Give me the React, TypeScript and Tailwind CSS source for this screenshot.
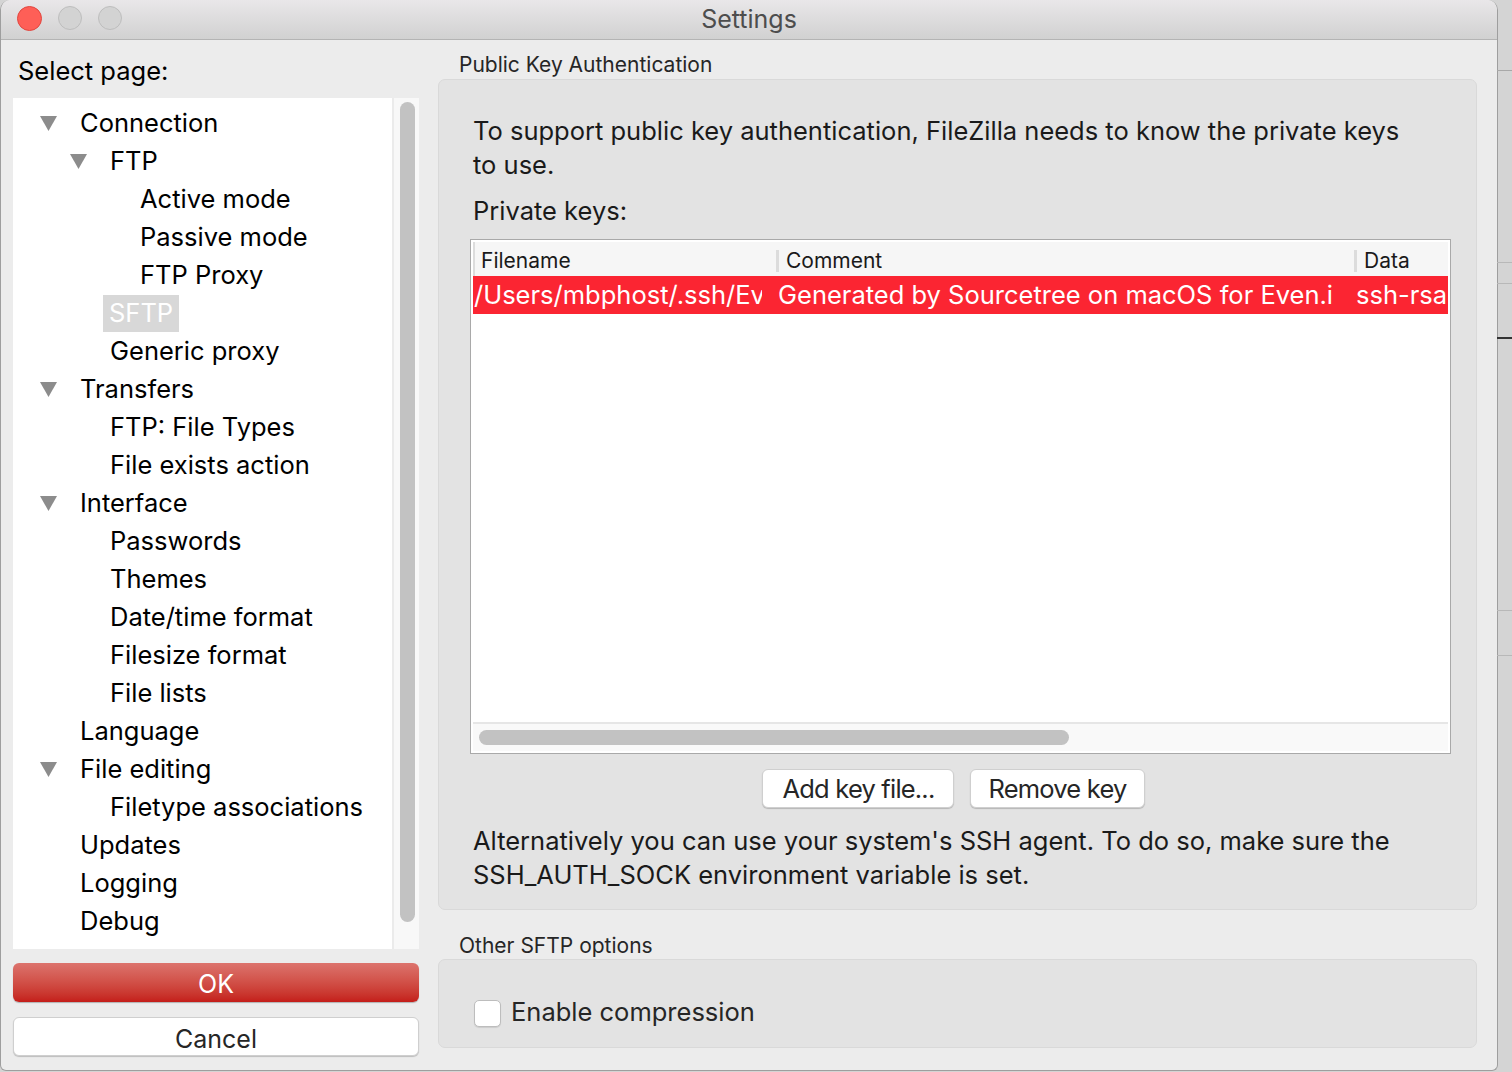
import React from 'react';

type TreeItem = { label: string; level: number; expanded?: boolean; selected?: boolean };

const tree: TreeItem[] = [
  { label: 'Connection', level: 0, expanded: true },
  { label: 'FTP', level: 1, expanded: true },
  { label: 'Active mode', level: 2 },
  { label: 'Passive mode', level: 2 },
  { label: 'FTP Proxy', level: 2 },
  { label: 'SFTP', level: 1, selected: true },
  { label: 'Generic proxy', level: 1 },
  { label: 'Transfers', level: 0, expanded: true },
  { label: 'FTP: File Types', level: 1 },
  { label: 'File exists action', level: 1 },
  { label: 'Interface', level: 0, expanded: true },
  { label: 'Passwords', level: 1 },
  { label: 'Themes', level: 1 },
  { label: 'Date/time format', level: 1 },
  { label: 'Filesize format', level: 1 },
  { label: 'File lists', level: 1 },
  { label: 'Language', level: 0 },
  { label: 'File editing', level: 0, expanded: true },
  { label: 'Filetype associations', level: 1 },
  { label: 'Updates', level: 0 },
  { label: 'Logging', level: 0 },
  { label: 'Debug', level: 0 },
];

const indent = ['pl-[67px]', 'pl-[97px]', 'pl-[127px]'];
const arrowPos = ['left-[27px]', 'left-[57px]', 'left-[87px]'];

function Disclosure({ level }: { level: number }) {
  return (
    <svg className={`absolute top-[12px] ${arrowPos[level]} w-[17px] h-[15px]`} viewBox="0 0 17 15">
      <path d="M0 0 H17 L8.5 15 Z" fill="#8c8c8c" />
    </svg>
  );
}

function TreeRow({ item }: { item: TreeItem }) {
  return (
    <div className={`relative h-[38px] flex items-center ${indent[item.level]}`}>
      {item.expanded && <Disclosure level={item.level} />}
      {item.selected ? (
        <span className="-ml-[7px] px-[6px] h-[37px] flex items-center bg-[#d8d8d8] text-white">{item.label}</span>
      ) : (
        <span>{item.label}</span>
      )}
    </div>
  );
}

export default function App() {
  return (
    <div
      className="relative w-[1512px] h-[1072px] overflow-hidden bg-[#d4d4d4] text-black"
      style={{ fontFamily: 'Inter, "Noto Sans", sans-serif' }}
    >
      {/* background app peeking out on the right */}
      <div className="absolute right-0 top-[70px] w-[15px] h-px bg-[#a8a8a8]" />
      <div className="absolute right-0 top-[262px] w-[15px] h-px bg-[#b8b8b8]" />
      <div className="absolute right-0 top-[283px] w-[15px] h-px bg-[#b8b8b8]" />
      <div className="absolute right-0 top-[337px] w-[15px] h-[2px] bg-[#333]" />
      <div className="absolute right-0 top-[610px] w-[15px] h-px bg-[#b8b8b8]" />
      <div className="absolute right-0 top-[655px] w-[15px] h-px bg-[#b8b8b8]" />

      {/* window */}
      <div className="w-[1498px] h-[1071px] flex flex-col bg-[#ececec] rounded-t-[10px] rounded-b-[6px] border-l border-r border-b border-[#9e9e9e] overflow-hidden">
        {/* title bar */}
        <div className="relative h-[40px] shrink-0 flex items-center justify-center bg-gradient-to-b from-[#e9e7e9] to-[#d1d1d1] border-b border-[#b4b4b4]">
          <div className="absolute left-[16px] top-[6px] flex gap-[16px]">
            <div className="w-[25px] h-[25px] rounded-full bg-[#fe5f57] border border-[#e1463f]" />
            <div className="w-[24px] h-[24px] rounded-full bg-[#d3d3d3] border border-[#bdbdbd]" />
            <div className="w-[24px] h-[24px] rounded-full bg-[#d3d3d3] border border-[#bdbdbd]" />
          </div>
          <span className="text-[25px] text-[#4d4d4d]">Settings</span>
        </div>

        {/* body */}
        <div className="flex-1 flex pl-[12px] pr-[20px]">
          {/* left column */}
          <div className="w-[406px] flex flex-col">
            <div className="h-[58px] pt-[14px] pl-[5px] text-[25.5px] leading-[34px]">Select page:</div>
            <div className="h-[851px] flex bg-white">
              <div className="flex-1 pt-[6px] text-[25.5px]">
                {tree.map((item) => (
                  <TreeRow key={item.label} item={item} />
                ))}
              </div>
              <div className="w-[27px] flex border-l-2 border-[#ebebeb] bg-[#f8f8f8] pt-[4px] pl-[6px]">
                <div className="w-[15px] h-[820px] rounded-full bg-[#c2c2c2]" />
              </div>
            </div>
            <button className="mt-[14px] h-[39px] pt-[3px] rounded-[6px] bg-gradient-to-b from-[#dc736d] to-[#c41d19] text-white text-[25px] shadow-[0_1px_1px_rgba(0,0,0,0.25)]">
              OK
            </button>
            <button className="mt-[15px] h-[39px] pt-[3px] rounded-[6px] bg-white border border-[#cfcfcf] text-[#262626] text-[25px] shadow-[0_1px_1px_rgba(0,0,0,0.2)]">
              Cancel
            </button>
          </div>

          {/* right column */}
          <div className="flex-1 ml-[19px] flex flex-col">
            <div className="h-[39px] pt-[13px] pl-[21px] text-[21px] leading-[24px] text-[#262626]">Public Key Authentication</div>
            <div className="h-[831px] rounded-[7px] bg-[#e3e3e3] border border-[#d9d9d9] pt-[34px] pl-[34px] pr-[25px]">
              <p className="text-[25.5px] leading-[34px] text-[#1a1a1a]">
                To support public key authentication, FileZilla needs to know the private keys
                <br />
                to use.
              </p>
              <p className="mt-[12px] text-[25.5px] leading-[34px] text-[#1a1a1a]">Private keys:</p>
              <div className="mt-[11px] -ml-[3px] h-[515px] border border-[#a9a9a9] bg-white flex flex-col p-[2px]">
                {/* header */}
                <div className="h-[34px] flex items-center bg-[#f6f6f6] text-[21px] text-[#1a1a1a]">
                  <div className="w-[303px] h-full flex items-center border-l-2 border-[#dcdcdc] pl-[6px] pt-[3px]">Filename</div>
                  <div className="w-[578px] h-full flex items-center pt-[3px]">
                    <span className="w-[3px] h-[22px] bg-[#dcdcdc] mr-[7px]" />
                    Comment
                  </div>
                  <div className="flex-1 h-full flex items-center pt-[3px]">
                    <span className="w-[3px] h-[22px] bg-[#dcdcdc] mr-[7px]" />
                    Data
                  </div>
                </div>
                {/* selected row */}
                <div className="h-[38px] flex items-center bg-[#fb2532] text-white text-[25.5px] whitespace-nowrap pl-[1px]">
                  <div className="w-[288px] overflow-hidden">/Users/mbphost/.ssh/Even.id_rsa</div>
                  <div className="w-[16px]" />
                  <div className="w-[562px] overflow-hidden">Generated by Sourcetree on macOS for Even.i</div>
                  <div className="w-[16px]" />
                  <div className="flex-1 overflow-hidden">ssh-rsa</div>
                </div>
                <div className="flex-1" />
                {/* horizontal scrollbar */}
                <div className="h-[29px] border-t-2 border-[#e6e6e6] bg-[#f9f9f9] pt-[6px] pl-[6px]">
                  <div className="w-[590px] h-[15px] rounded-full bg-[#c2c2c2]" />
                </div>
              </div>
              <div className="mt-[15px] -ml-[3px] pr-[14px] flex justify-center gap-[16px] text-[25.5px] text-[#262626]">
                <button className="h-[39px] px-[19px] rounded-[6px] bg-white border border-[#cfcfcf] shadow-[0_1px_1px_rgba(0,0,0,0.2)] tracking-[-0.8px]">
                  Add key file...
                </button>
                <button className="h-[39px] px-[17px] rounded-[6px] bg-white border border-[#cfcfcf] shadow-[0_1px_1px_rgba(0,0,0,0.2)] tracking-[-0.8px]">
                  Remove key
                </button>
              </div>
              <p className="mt-[16px] text-[25.5px] leading-[34px] text-[#1a1a1a]">
                Alternatively you can use your system's SSH agent. To do so, make sure the
                <br />
                SSH_AUTH_SOCK environment variable is set.
              </p>
            </div>
            <div className="h-[49px] pt-[24px] pl-[21px] text-[21px] leading-[24px] text-[#262626]">Other SFTP options</div>
            <div className="h-[89px] rounded-[7px] bg-[#e3e3e3] border border-[#d9d9d9] pl-[35px] flex items-center">
              <div className="w-[27px] h-[27px] mt-[20px] rounded-[5px] bg-white border border-[#bdbdbd] shadow-[0_1px_1px_rgba(0,0,0,0.1)] shrink-0" />
              <span className="ml-[10px] mt-[18px] text-[25.5px] text-[#262626]">Enable compression</span>
            </div>
          </div>
        </div>
      </div>
    </div>
  );
}
